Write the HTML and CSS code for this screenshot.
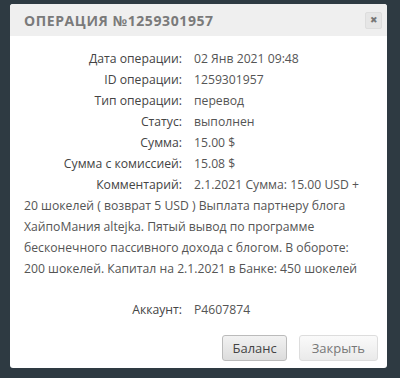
FILE: index.html
```html
<!DOCTYPE html>
<html lang="ru">
<head>
    <meta charset="UTF-8">
    <title>Операция</title>
    <link rel="stylesheet" href="styles.css">
</head>
<body>
    <div class="modal">
        <div class="modal-header">
            <h3>Операция №1259301957</h3>
            <button class="close">&#x2716;</button>
        </div>

        <div class="modal-body">
            <p class="row"><span class="label">Дата операции:</span>02 Янв 2021 09:48</p>
            <p class="row"><span class="label">ID операции:</span>1259301957</p>
            <p class="row"><span class="label">Тип операции:</span>перевод</p>
            <p class="row"><span class="label">Статус:</span>выполнен</p>
            <p class="row"><span class="label">Сумма:</span>15.00 $</p>
            <p class="row"><span class="label">Сумма с комиссией:</span>15.08 $</p>
            <p class="row"><span class="label">Комментарий:</span>2.1.2021 Сумма: 15.00 USD + 20 шокелей ( возврат 5 USD ) Выплата партнеру блога ХайпоМания altejka. Пятый вывод по программе бесконечного пассивного дохода с блогом. В обороте: 200 шокелей. Капитал на 2.1.2021 в Банке: 450 шокелей</p>
            <p class="row account"><span class="label">Аккаунт:</span>P4607874</p>
        </div>

        <div class="modal-footer">
            <button class="btn btn-main">Баланс</button>
            <button class="btn">Закрыть</button>
        </div>
    </div>
</body>
</html>
```

FILE: styles.css
```css
body {
    margin: 0;
    padding: 4px 13px 0 10px;
    background-color: #2e3a42;
    font-family: "Open Sans", sans-serif;
    height: 378px;
    box-sizing: border-box;
    overflow: hidden;
}

.modal {
    background-color: #fff;
    border-radius: 3px;
    height: 364px;
    display: flex;
    flex-direction: column;
}

.modal-header {
    background-color: #efefef;
    border-radius: 3px 3px 0 0;
    height: 32px;
    flex-shrink: 0;
    display: flex;
    align-items: center;
    justify-content: space-between;
    padding: 0 5px 0 14px;
}

.modal-header h3 {
    margin: 0;
    font-size: 14px;
    font-weight: 700;
    color: #7a7a7a;
    text-transform: uppercase;
    letter-spacing: 0.6px;
}

.close {
    width: 17px;
    height: 17px;
    padding: 0;
    border: 1px solid #ddd;
    border-radius: 2px;
    background-color: #e6e6e6;
    color: #777;
    font-size: 9px;
    line-height: 15px;
}

.modal-body {
    padding: 12px 16px 0 14px;
    font-size: 12.2px;
    color: #555;
    flex: 1;
}

.row {
    margin: 0;
    line-height: 21px;
}

.label {
    display: inline-block;
    width: 158px;
    margin-right: 12px;
    text-align: right;
    color: #444;
}

.account {
    margin-top: 20px;
}

.modal-footer {
    display: flex;
    justify-content: flex-end;
    gap: 12px;
    padding: 0 9px 7px 0;
}

.btn {
    height: 26px;
    padding: 0 12px;
    font-family: "Open Sans", sans-serif;
    font-size: 13px;
    color: #777;
    background: linear-gradient(#fafafa, #eaeaea);
    border: 1px solid #ddd;
    border-radius: 3px;
}

.btn-main {
    padding: 0 9px;
    color: #444;
    background: linear-gradient(#f2f2f2, #dcdcdc);
    border-color: #bbb;
}
```
